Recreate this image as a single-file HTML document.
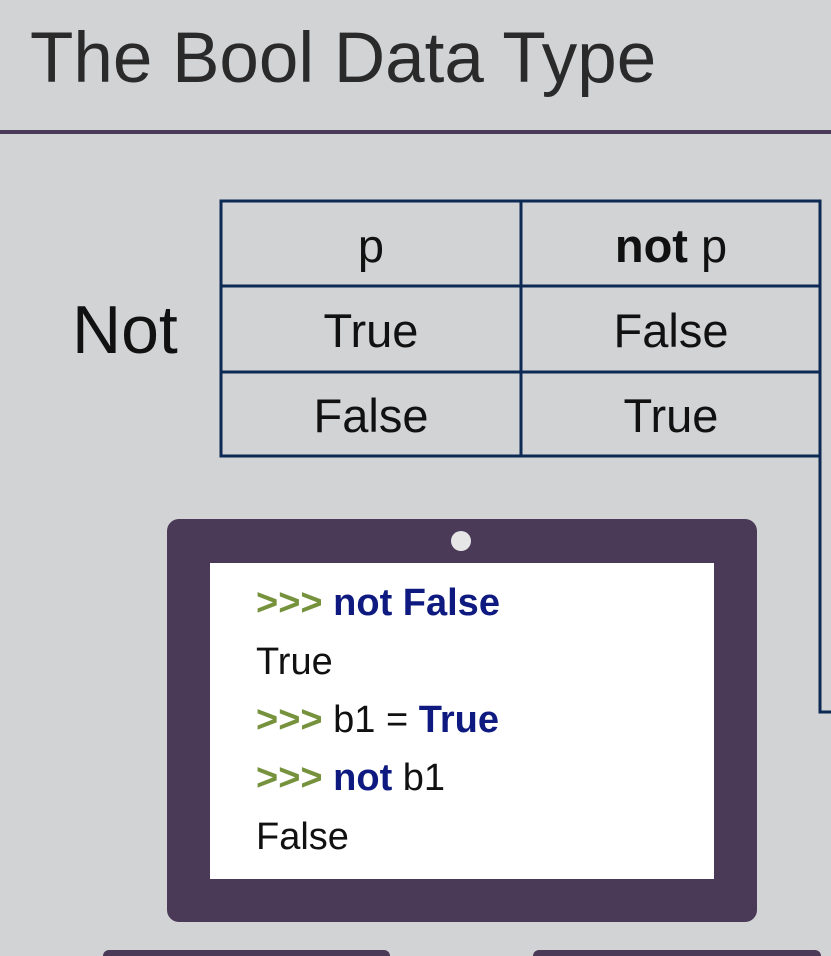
<!DOCTYPE html>
<html><head><meta charset="utf-8"><style>
body{margin:0;width:831px;height:956px;background:#d1d3d5;position:relative;overflow:hidden;font-family:"Liberation Sans",sans-serif}
.a{position:absolute;white-space:nowrap}
.t{position:absolute;font-size:47px;color:#111;text-align:center;width:300px;line-height:86px}
.code{position:absolute;left:256px;font-size:38px;color:#111;line-height:40px}
.g{color:#76923c;font-weight:bold}.n{color:#0e1a80;font-weight:bold}
</style></head><body>
<div class="a" style="left:30px;top:16px;font-size:71px;color:#2a2a2a;line-height:86px">The Bool Data Type</div>
<div class="a" style="left:0;top:130px;width:831px;height:4px;background:#4a3a57"></div>
<div class="a" style="left:72px;top:290px;font-size:68px;color:#111;line-height:80px">Not</div>
<svg class="a" style="left:0;top:0" width="831" height="956">
<g stroke="#0d2a55" stroke-width="3" fill="none">
<rect x="221" y="201" width="599" height="255"/>
<line x1="221" y1="286" x2="820" y2="286"/>
<line x1="221" y1="372" x2="820" y2="372"/>
<line x1="521" y1="201" x2="521" y2="456"/>
<polyline points="820,456 820,712 831,712"/>
</g>
<rect x="167" y="519" width="590" height="403" rx="12" fill="#4a3a57"/>
<rect x="210" y="563" width="504" height="316" fill="#fff"/>
<circle cx="461" cy="541" r="10" fill="#e6e6e6"/>
<rect x="103" y="950" width="287" height="20" rx="6" fill="#4a3a57"/>
<rect x="533" y="950" width="288" height="20" rx="6" fill="#4a3a57"/>
</svg>
<div class="t" style="left:221px;top:203px">p</div>
<div class="t" style="left:521px;top:203px"><b>not</b> p</div>
<div class="t" style="left:221px;top:288px">True</div>
<div class="t" style="left:521px;top:288px">False</div>
<div class="t" style="left:221px;top:373px">False</div>
<div class="t" style="left:521px;top:373px">True</div>
<div class="code" style="top:583px"><span class="g">&gt;&gt;&gt;</span> <span class="n">not False</span></div>
<div class="code" style="top:642px">True</div>
<div class="code" style="top:700px"><span class="g">&gt;&gt;&gt;</span> b1 = <span class="n">True</span></div>
<div class="code" style="top:758px"><span class="g">&gt;&gt;&gt;</span> <span class="n">not</span> b1</div>
<div class="code" style="top:817px">False</div>
</body></html>
